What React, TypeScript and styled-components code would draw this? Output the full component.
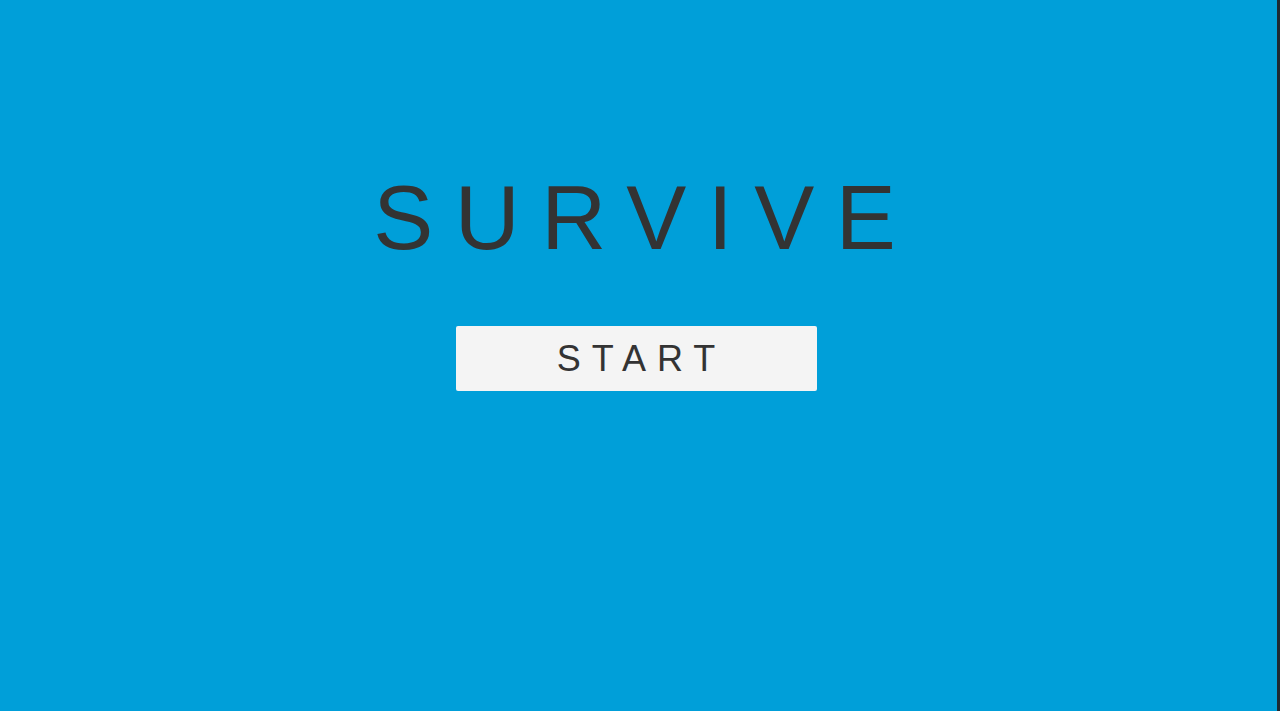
import styled, { createGlobalStyle } from "styled-components";

const GlobalStyle = createGlobalStyle`
  html, body {
    margin: 0;
    padding: 0;
    height: 100%;
  }
  body {
    font-family: "Liberation Sans", Arial, sans-serif;
    background: #009fd9;
  }
`;

const Screen = styled.div`
  height: 711px;
  display: flex;
  background: #009fd9;
  overflow: hidden;
`;

const Stage = styled.div`
  flex: 1;
  display: flex;
  flex-direction: column;
  align-items: center;
  padding-top: 168px;
`;

const EdgeBar = styled.div`
  width: 3px;
  background: #1d2a33;
`;

const Title = styled.h1`
  margin: 0;
  font-size: 90px;
  font-weight: 400;
  line-height: 100px;
  letter-spacing: 21.5px;
  padding-left: 13.5px;
  color: #333333;
`;

const StartButton = styled.button`
  margin: 58px 4px 0 0;
  width: 361px;
  height: 65px;
  border: none;
  border-radius: 2px;
  background: #f4f4f4;
  color: #333333;
  font-family: "Liberation Sans", Arial, sans-serif;
  font-size: 36px;
  letter-spacing: 11px;
  padding: 0 0 0 10px;
  cursor: pointer;
`;

export default function App() {
  return (
    <>
      <GlobalStyle />
      <Screen>
        <Stage>
          <Title>SURVIVE</Title>
          <StartButton>START</StartButton>
        </Stage>
        <EdgeBar />
      </Screen>
    </>
  );
}
